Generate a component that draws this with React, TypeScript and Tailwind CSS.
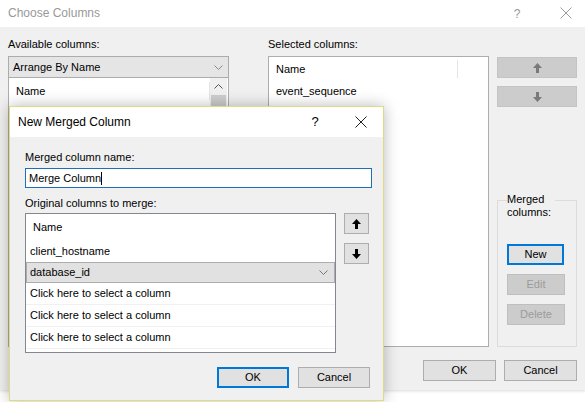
import React from "react";

const font = { fontFamily: '"Liberation Sans", Arial, sans-serif' };

function Chevron({ className = "" }: { className?: string }) {
  return (
    <svg width="9" height="5" viewBox="0 0 9 5" className={className}>
      <path d="M0.5 0.5 L4.5 4.5 L8.5 0.5" fill="none" stroke="currentColor" strokeWidth="1" />
    </svg>
  );
}

function Arrow({ down = false, className = "" }: { down?: boolean; className?: string }) {
  return (
    <svg width="9" height="10" viewBox="0 0 9 10" className={className} style={down ? { transform: "rotate(180deg)" } : undefined}>
      <path d="M4.5 0 L9 5 L6 5 L6 10 L3 10 L3 5 L0 5 Z" fill="currentColor" />
    </svg>
  );
}

function CloseX({ className = "" }: { className?: string }) {
  return (
    <svg width="12" height="12" viewBox="0 0 12 12" className={className}>
      <path d="M0.5 0.5 L11.5 11.5 M11.5 0.5 L0.5 11.5" stroke="currentColor" strokeWidth="1" />
    </svg>
  );
}

function Button({ label, variant = "normal", className = "" }: { label: string; variant?: "normal" | "default" | "disabled"; className?: string }) {
  const styles = {
    normal: "bg-[#e1e1e1] border-[#adadad] text-black",
    default: "bg-[#e1e1e1] border-[#0078d7] border-2 text-black",
    disabled: "bg-[#cccccc] border-[#bfbfbf] text-[#9b9b9b]",
  }[variant];
  return (
    <div className={`flex items-center justify-center border h-[21px] text-[11px] ${styles} ${className}`}>{label}</div>
  );
}

function ChooseColumns() {
  return (
    <div className="h-[390px] w-full border-b border-[#a8a8a8] shadow-[0_1px_3px_rgba(0,0,0,0.15)]">
      <div className="h-[27px] bg-white flex items-start pt-[4px] pl-[8px] text-[12px] text-[#999999]">
        <span className="flex-1">Choose Columns</span>
        <span className="w-[20px] text-center mr-[33px] mt-[1px]">?</span>
        <CloseX className="mr-[13px] mt-[3px] text-[#9a9a9a]" />
      </div>
      <div className="h-[363px] bg-[#f0f0f0] pt-[10px] px-[8px] text-[11px] text-black flex flex-col">
        <div className="flex h-[310px]">
          <div className="w-[221px] flex flex-col">
            <div className="h-[14px] leading-[14px]">Available columns:</div>
            <div className="mt-[5px] h-[22px] bg-[#e5e5e5] border border-[#acacac] flex items-center pl-[4px] pr-[5px]">
              <span className="flex-1">Arrange By Name</span>
              <Chevron className="text-[#888]" />
            </div>
            <div className="flex-1 bg-white border border-[#adadad] border-t-0 flex">
              <div className="flex-1">
                <div className="h-[26px] flex items-center">
                  <span className="pl-[7px] flex-1">Name</span>
                  <span className="w-px h-[18px] bg-[#e5e5e5]" />
                </div>
              </div>
              <div className="w-[17px] bg-[#f0f0f0] flex flex-col mr-px">
                <div className="h-[17px] flex items-center justify-center">
                  <Chevron className="rotate-180 text-[#555]" />
                </div>
                <div className="h-[40px] bg-[#cdcdcd] mx-[1px]" />
              </div>
            </div>
          </div>
          <div className="w-[221px] ml-[39px] flex flex-col">
            <div className="h-[14px] leading-[14px]">Selected columns:</div>
            <div className="mt-[5px] flex-1 bg-white border border-[#adadad]">
              <div className="h-[24px] flex items-center">
                <span className="pl-[7px] flex-1">Name</span>
                <span className="w-px h-[18px] bg-[#e5e5e5] mr-[30px]" />
              </div>
              <div className="h-[21px] flex items-center pl-[7px]">event_sequence</div>
              <div className="h-[21px] flex items-center pl-[7px]">name</div>
            </div>
          </div>
          <div className="w-[80px] ml-[8px] flex flex-col pt-[20px]">
            <div className="h-[21px] bg-[#cccccc] border border-[#c4c4c4] flex items-center justify-center">
              <Arrow className="text-[#7a7a7a]" />
            </div>
            <div className="h-[21px] mt-[8px] bg-[#cccccc] border border-[#c4c4c4] flex items-center justify-center">
              <Arrow down className="text-[#7a7a7a]" />
            </div>
            <div className="mt-auto h-[147px] border border-[#dcdcdc] flex flex-col px-[9px] relative">
              <div className="bg-[#f0f0f0] -mt-[8px] pl-[0px] pr-[4px] w-fit leading-[13px]">
                Merged
                <br />
                columns:
              </div>
              <Button label="New" variant="default" className="mt-[25px] w-[57px]" />
              <Button label="Edit" variant="disabled" className="mt-[9px] w-[58px]" />
              <Button label="Delete" variant="disabled" className="mt-[9px] w-[58px]" />
            </div>
          </div>
        </div>
        <div className="flex justify-end gap-[8px] mt-[13px]">
          <Button label="OK" className="w-[73px]" />
          <Button label="Cancel" className="w-[73px]" />
        </div>
      </div>
    </div>
  );
}

function NewMergedColumn() {
  return (
    <div className="absolute left-[9px] top-[106px] w-[375px] h-[295px] border border-[#dedb82] bg-[#f0f0f0] shadow-[0_0_14px_rgba(0,0,0,0.28)] flex flex-col">
      <div className="h-[30px] bg-white flex items-center pl-[8px] text-[12px] text-black">
        <span className="flex-1">New Merged Column</span>
        <span className="w-[12px] text-center mr-[34px] text-[13px]">?</span>
        <CloseX className="mr-[16px] text-[#222]" />
      </div>
      <div className="flex-1 pt-[13px] pl-[15px] pr-[11px] text-[11px] text-black flex flex-col">
        <div className="h-[14px] leading-[14px]">Merged column name:</div>
        <div className="mt-[4px] h-[20px] bg-white border border-[#1e6fba] flex items-center pl-[3px]">
          <span>Merge Column</span>
          <span className="w-px h-[13px] bg-black" />
        </div>
        <div className="mt-[8px] h-[14px] leading-[14px]">Original columns to merge:</div>
        <div className="mt-[3px] flex h-[140px]">
          <div className="w-[311px] bg-white border border-[#828790] flex flex-col">
            <div className="h-[27px] flex items-center pl-[7px]">Name</div>
            <div className="h-[21px] flex items-center pl-[4px]">client_hostname</div>
            <div className="h-[21px] bg-[#e1e1e1] border border-[#adadad] flex items-center pl-[3px] pr-[6px]">
              <span className="flex-1">database_id</span>
              <Chevron className="text-[#777]" />
            </div>
            {[0, 1, 2].map((i) => (
              <div key={i} className="h-[22px] flex items-center pl-[4px] border-b border-[#f0f0f0]">
                Click here to select a column
              </div>
            ))}
          </div>
          <div className="ml-[8px] flex flex-col">
            <div className="w-[25px] h-[21px] bg-[#e1e1e1] border border-[#adadad] flex items-center justify-center">
              <Arrow className="text-black" />
            </div>
            <div className="w-[25px] h-[21px] mt-[9px] bg-[#e1e1e1] border border-[#adadad] flex items-center justify-center">
              <Arrow down className="text-black" />
            </div>
          </div>
        </div>
        <div className="flex justify-end gap-[9px] mt-[14px] pr-[2px]">
          <Button label="OK" variant="default" className="w-[72px]" />
          <Button label="Cancel" className="w-[72px]" />
        </div>
      </div>
    </div>
  );
}

export default function App() {
  return (
    <div className="relative w-[585px] h-[402px] bg-white overflow-hidden" style={font}>
      <ChooseColumns />
      <NewMergedColumn />
    </div>
  );
}
